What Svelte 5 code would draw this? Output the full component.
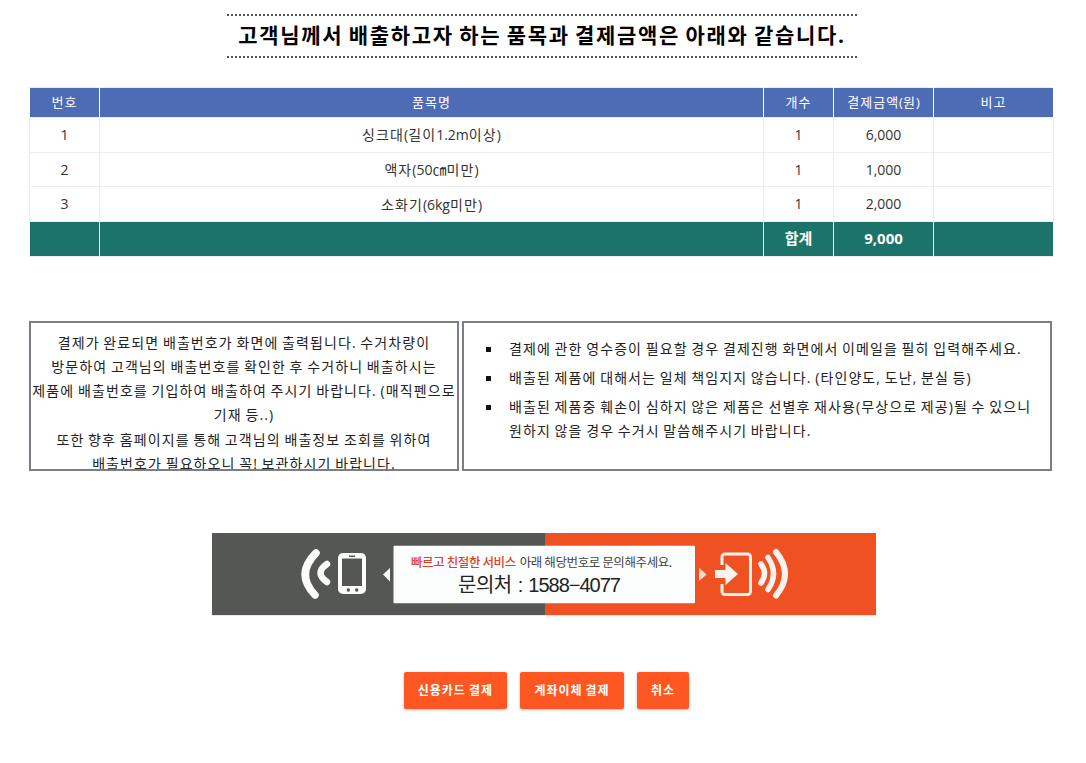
<script>
  const rows = [
    { no: 1, name: '싱크대(길이1.2m이상)', qty: 1, price: '6,000' },
    { no: 2, name: '액자(50㎝미만)', qty: 1, price: '1,000' },
    { no: 3, name: '소화기(6kg미만)', qty: 1, price: '2,000' }
  ];
  // Hangul runs get wider tracking; Latin runs keep their natural advance.
  const parts = (s) => s.split(/([^\uAC00-\uD7A3]+)/).filter(Boolean);
  const isHangul = (s) => /^[\uAC00-\uD7A3]/.test(s);
</script>

<main class="page">
  <h1 class="title">고객님께서 배출하고자 하는 품목과 결제금액은 아래와 같습니다.</h1>

  <table class="items">
    <colgroup>
      <col class="c1" /><col /><col class="c3" /><col class="c4" /><col class="c5" />
    </colgroup>
    <thead>
      <tr><th>번호</th><th>품목명</th><th>개수</th><th>결제금액<span class="lat">(</span>원<span class="lat">)</span></th><th>비고</th></tr>
    </thead>
    <tbody>
      {#each rows as r}
        <tr>
          <td>{r.no}</td>
          <td>{#each parts(r.name) as p}<span class={isHangul(p) ? 'han' : 'lat'}>{p}</span>{/each}</td>
          <td>{r.qty}</td>
          <td>{r.price}</td>
          <td></td>
        </tr>
      {/each}
    </tbody>
    <tfoot>
      <tr><td></td><td></td><td class="sum">합계</td><td class="sum">9,000</td><td></td></tr>
    </tfoot>
  </table>

  <section class="notes">
    <div class="note left">
      결제가 완료되면 배출번호가 화면에 출력됩니다. 수거차량이<br />
      방문하여 고객님의 배출번호를 확인한 후 수거하니 배출하시는<br />
      제품에 배출번호를 기입하여 배출하여 주시기 바랍니다. (매직펜으로 기재 등..)<br />
      또한 향후 홈페이지를 통해 고객님의 배출정보 조회를 위하여<br />
      배출번호가 필요하오니 꼭! 보관하시기 바랍니다.
    </div>
    <div class="note right">
      <ul>
        <li>결제에 관한 영수증이 필요할 경우 결제진행 화면에서 이메일을 필히 입력해주세요.</li>
        <li>배출된 제품에 대해서는 일체 책임지지 않습니다. (타인양도, 도난, 분실 등)</li>
        <li>배출된 제품중 훼손이 심하지 않은 제품은 선별후 재사용(무상으로 제공)될 수 있으니 원하지 않을 경우 수거시 말씀해주시기 바랍니다.</li>
      </ul>
    </div>
  </section>

  <svg class="banner" viewBox="0 0 664 83" width="664" height="83" role="img" aria-label="문의처 1588-4077">
    <rect width="333" height="82" fill="#555755" />
    <rect x="333" width="331" height="82" fill="#f05122" />
    <rect y="82" width="664" height="1" fill="#e9e9e7" />
    <!-- waves left -->
    <g fill="none" stroke="#fcfcfa" stroke-linecap="round">
      <path d="M104 20 Q 83 41 103 62" stroke-width="7.500" />
      <path d="M115 31 Q 102 40 115 49" stroke-width="6.500" />
    </g>
    <!-- phone -->
    <rect x="126" y="20" width="28" height="41" rx="5" fill="#fcfcfa" />
    <rect x="130" y="25.500" width="20" height="27.500" fill="#555755" />
    <rect x="137" y="22.500" width="6" height="1.500" fill="#555755" />
    <circle cx="136.300" cy="57" r="1.700" fill="#555755" />
    <circle cx="144.700" cy="57" r="1.700" fill="#555755" />
    <path d="M171 41.500 L178 35 V48.500 Z" fill="#fcfcfa" />
    <!-- card -->
    <rect x="181.500" y="12.700" width="301.500" height="57.600" rx="1" fill="#fcfefd" />
    <text x="199" y="34" class="b-small"><tspan fill="#e0412b" font-weight="500">빠르고 친절한 서비스</tspan><tspan fill="#444" dx="4">아래 해당번호로 문의해주세요.</tspan></text>
    <text x="246" y="59" class="b-big"><tspan class="b-han">문의처</tspan><tspan dx="6">:</tspan><tspan dx="6">1588−4077</tspan></text>
    <path d="M487 34.700 L494.700 41.500 L487 48 Z" fill="#f7d9c9" />
    <!-- door icon -->
    <path d="M510 32 V24 a3 3 0 0 1 3 -3 H535.500 a3 3 0 0 1 3 3 V58.500 a3 3 0 0 1 -3 3 H513 a3 3 0 0 1 -3 -3 V51" fill="none" stroke="#fdf3ee" stroke-width="3" />
    <path d="M503 37 H513.500 V30 L526 41 L513.500 52 V45 H503 Z" fill="#fdf3ee" />
    <g fill="none" stroke="#fdf3ee" stroke-linecap="round">
      <path d="M549 31 Q 556 40.500 549 50" stroke-width="5.500" />
      <path d="M556 24.500 Q 567 40.500 556 56.500" stroke-width="5.500" />
      <path d="M564 19 Q 582 41 564 62.500" stroke-width="6" />
    </g>
  </svg>

  <div class="actions">
    <button type="button">신용카드 결제</button>
    <button type="button">계좌이체 결제</button>
    <button type="button">취소</button>
  </div>
</main>

<style>
  :global(body) {
    margin: 0;
    background: #fff;
    font-family: "Open Sans", "Noto Sans CJK KR", sans-serif;
    color: #333;
  }
  .page {
    width: 1086px;
    height: 763px;
    overflow: hidden;
    padding-top: 14px;
    box-sizing: border-box;
  }
  .title {
    width: 630px;
    height: 44px;
    box-sizing: border-box;
    margin: 0 0 29px 227px;
    border-top: 2px dotted #555;
    border-bottom: 2px dotted #555;
    font-size: 21px;
    letter-spacing: 1.68px;
    word-spacing: -1.68px;
    line-height: 39px;
    font-weight: 700;
    text-align: center;
    color: #000;
    white-space: nowrap;
  }
  .items {
    width: 1025px;
    margin-left: 29px;
    border-collapse: collapse;
    table-layout: fixed;
    font-size: 14px;
  }
  .c1 { width: 70px; }
  .c3 { width: 70px; }
  .c4 { width: 100px; }
  .c5 { width: 120px; }
  th, td {
    border: 1px solid #eee;
    text-align: center;
    padding: 0;
    font-weight: 400;
  }
  thead th {
    height: 26px;
    padding-bottom: 3px;
    background: #4e6bb5;
    color: #fff;
    border-left-color: #fff;
    border-right-color: #fff;
    font-size: 13px;
    letter-spacing: 1px;
  }
  tbody td {
    height: 32.7px;
    padding-bottom: 1px;
    color: #333;
  }
  .han { letter-spacing: 1.1px; }
  .lat { letter-spacing: 0; }
  tfoot td {
    height: 31.7px;
    padding-bottom: 2px;
    background: #1b7369;
    color: #fff;
    border-left-color: #fff;
    border-right-color: #fff;
  }
  .sum { font-size: 15px; font-weight: 700; }
  .notes {
    display: flex;
    gap: 3px;
    margin: 64px 0 0 29px;
    width: 1023px;
    height: 150px;
    font-size: 14px;
    letter-spacing: 1.1px;
    word-spacing: -1.1px;
    color: #222;
  }
  .note {
    border: 2px solid #7b7e84;
    box-sizing: border-box;
    height: 150px;
    overflow: hidden;
  }
  .left {
    width: 430px;
    flex: none;
    padding-top: 8px;
    line-height: 24.2px;
    text-align: center;
  }
  .right { flex: 1; }
  ul {
    list-style: none;
    margin: 14px 0 0;
    padding: 0 18px 0 45px;
    line-height: 24px;
  }
  li {
    position: relative;
    margin-bottom: 5px;
  }
  li::before {
    content: "";
    position: absolute;
    left: -23px;
    top: 10px;
    width: 5px;
    height: 5px;
    background: #111;
  }
  .banner {
    display: block;
    margin: 62px 0 0 212px;
  }
  .b-small {
    font-family: "Noto Sans CJK KR", sans-serif;
    font-size: 12.500px;
    letter-spacing: -0.4px;
  }
  .b-big {
    font-family: "Liberation Sans", "Noto Sans CJK KR", sans-serif;
    font-size: 20px;
    letter-spacing: -1px;
    fill: #222;
  }
  .b-han { letter-spacing: -0.5px; }
  .actions {
    display: flex;
    justify-content: center;
    gap: 13.5px;
    margin-top: 56px;
    padding-left: 7px;
  }
  button {
    height: 37px;
    padding: 0 14px;
    border: 0;
    border-radius: 2px;
    background: #ff5722;
    color: #fff;
    font-family: inherit;
    font-size: 12px;
    letter-spacing: 0.96px;
    word-spacing: -0.96px;
    font-weight: 700;
    box-shadow: 0 1px 3px rgba(0, 0, 0, 0.25);
  }
</style>
